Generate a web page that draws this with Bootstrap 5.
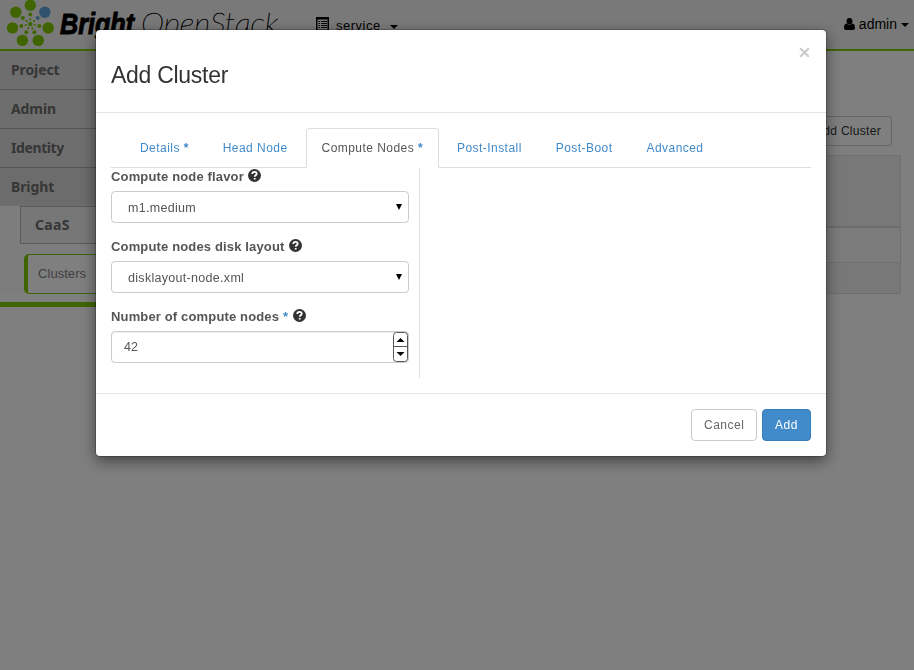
<!DOCTYPE html>
<html lang="en">
<head>
<meta charset="utf-8">
<meta name="viewport" content="width=device-width, initial-scale=1">
<title>Add Cluster</title>
<link href="https://cdn.jsdelivr.net/npm/bootstrap@5.3.0/dist/css/bootstrap.min.css" rel="stylesheet">
<style>
body{font-family:"Liberation Sans",Arial,sans-serif;font-size:13px;line-height:18px;color:#555;background:#fff;overflow:hidden}
.topbar{height:51px;background:#f2f2f2;border-bottom:2px solid #80cb00;color:#000}
.brand-logo{width:290px;height:49px;display:block}
.project-switch{margin-left:26px;padding-top:17px;letter-spacing:.5px}
.project-label{margin-left:7px}
.user-menu{padding:15px 5px 0 0;font-size:14px}
.user-icon{margin-top:3px}
.user-caret{margin-top:8px}
.side{width:240px;background:#fafafa;height:242px;font-family:"Noto Sans","Open Sans",sans-serif;font-weight:700;font-size:14px;letter-spacing:-.1px}
.side-item{height:39px;padding:10px 11px;background:#ddd;border-bottom:1px solid #aaa;color:#6c6c6c}
.side-item.tight{letter-spacing:-.4px}
.side-item.open{border-bottom-color:#ddd;background:#d8d8d8;height:38px}
.side-sub{margin-left:20px;height:38px;padding:9px 14px;border:1px solid #b4b4b4;background:#eee;color:#6c6c6c;letter-spacing:.3px}
.side-leaf{margin:10px 0 0 24px;height:40px;padding:10px;border:1px solid #80cb00;border-left-width:4px;border-radius:5px;background:#fff;color:#808080;font:13px/18px "Liberation Sans",Arial,sans-serif;letter-spacing:.05px}
.side-end{width:240px;height:5px;margin-top:9px;background:#80cb00}
.page-main{padding:65px 13px 0 20px}
.page-add{height:30px;width:110px;margin-right:9px;padding-right:10px;border:1px solid #ccc;border-radius:3px;color:#333;font-size:12px;letter-spacing:.3px}
.clusters{margin-top:9px;border:1px solid #ddd}
.cl-head{height:72px;background:#f1f1f1;border-bottom:2px solid #ddd}
.cl-row{height:35px;background:#f9f9f9;border-bottom:1px solid #ddd}
.cl-foot{height:30px;background:#f1f1f1}
.veil{background:rgba(0,0,0,.5)}
.modal-dialog.cluster-dialog{width:730px;max-width:730px;margin:30px 0 0 96px}
.cluster-dialog .modal-content{height:426px;border:0;border-radius:4px;box-shadow:0 5px 15px rgba(0,0,0,.5),0 0 0 1px rgba(0,0,0,.2);color:#555}
.cluster-dialog .modal-header{height:83px;padding:15px;border-color:#e5e5e5}
.cluster-dialog h3{font-size:23px;line-height:30px;color:#333;letter-spacing:-.28px;margin-top:7px}
.close-x{width:11px;height:11px;margin:-37px 1px 0 0;border:0;padding:0;background:none}
.cluster-dialog .modal-body{padding:15px 15px 0}
.nav-tabs.steps{height:40px;padding-left:13px;border-color:#ddd;gap:2px;letter-spacing:.45px;font-size:12px}
.steps .nav-link{height:40px;padding:10px 15px;color:#428bca;border-radius:4px 4px 0 0;white-space:nowrap}
.steps .nav-link.active{color:#555;border-color:#ddd #ddd #fff}
.req{color:#428bca;font-weight:700}
.fields{width:309px;height:210px;padding-right:10px;border-right:1px solid #ddd}
.fields label{display:flex;align-items:center;height:18px;margin-bottom:5px;font-weight:700;font-size:13px;letter-spacing:.15px;white-space:pre}
.fields .field{height:70px}
.help{width:13px;height:13px;margin:-3px 0 0 4.5px}
.box{height:32px;border:1px solid #ccc;border-radius:4px;letter-spacing:.3px;padding:1px 0 0 16px;color:#555;background:#fff;font-size:12.5px}
.box svg{margin-top:-1px}
.pick-arrow{margin-right:5px}
.box.num{padding:0 0 0 12px;box-shadow:inset 0 1px 1px rgba(0,0,0,.075);letter-spacing:0}
.box.num svg{margin-top:0}
.cluster-dialog .modal-footer{height:63px;padding:15px;gap:5px;border-color:#e5e5e5;align-items:flex-start}
.modal-footer .btn{height:32px;margin:0;padding:5px 12px;font-size:12px;line-height:20px;border-radius:4px;letter-spacing:.5px}
.modal-footer .btn-cancel{width:66px;border-color:#ccc;color:#666;background:#fff}
.modal-footer .btn-add{width:49px;background:#428bca;border-color:#357ebd;color:#fff}
</style>
</head>
<body>
<header class="topbar d-flex">
<svg class="brand-logo" viewBox="0 0 290 49">
<g fill="#80cb00"><circle cx="30.300" cy="5.300" r="5.700"/><circle cx="15.800" cy="12.300" r="5.700"/><circle cx="12.500" cy="27.900" r="5.700"/><circle cx="22.400" cy="40.400" r="5.700"/><circle cx="38.300" cy="40.400" r="5.700"/><circle cx="48.200" cy="27.900" r="5.700"/>
<circle cx="30.300" cy="14.500" r="2"/><circle cx="22.900" cy="18" r="2"/><circle cx="21.300" cy="25.900" r="2"/><circle cx="26.300" cy="32.300" r="2"/><circle cx="34.400" cy="32.300" r="2"/><circle cx="39.300" cy="25.900" r="2"/>
<circle cx="30.300" cy="24" r="2.300"/><circle cx="30.300" cy="19.300" r="1.100"/><circle cx="26.600" cy="21.100" r="1.100"/><circle cx="34" cy="21.100" r="1.100"/><circle cx="25.800" cy="25" r="1.100"/><circle cx="34.800" cy="25" r="1.100"/><circle cx="28.200" cy="28.300" r="1.100"/><circle cx="32.400" cy="28.300" r="1.100"/></g>
<g fill="#61a5d8"><circle cx="44.800" cy="12.300" r="5.700"/><circle cx="37.600" cy="18" r="2"/></g>
<text x="60" y="34" textLength="74" lengthAdjust="spacingAndGlyphs" font-family="Liberation Sans" font-size="29" font-weight="700" font-style="italic" stroke="#000" stroke-width="1">Bright</text>
<text x="141" y="34" textLength="137" lengthAdjust="spacingAndGlyphs" font-family="Lato" font-size="29" font-weight="100" font-style="italic" stroke="#000" stroke-width=".45">OpenStack</text>
</svg>
<div class="project-switch d-flex"><svg width="13" height="14" viewBox="0 0 13 14"><path d="M.75.75h11.500v12.500H.75z" fill="none" stroke="#000" stroke-width="1.500"/><path d="M0 0h13v2.500H0z"/><path d="M2.500 4.500h1.500m1 0h6m-8.500 2h1.500m1 0h6m-8.500 2h1.500m1 0h6m-8.500 2h1.500m1 0h6" stroke="#000"/></svg><span class="project-label">service</span><svg class="ms-2 mt-2" width="9" height="4"><path d="M1 0h8l-4 4z"/></svg></div>
<div class="user-menu d-flex ms-auto"><svg class="user-icon" width="11" height="13" viewBox="0 0 11 13"><ellipse cx="5.500" cy="3.200" rx="2.900" ry="3.200"/><path d="M2.500 5.400C.5 5.800 0 7.800 0 10q0 2 2 2h7q2 0 2-2c0-2.200-.5-4.200-2.500-4.600Q5.500 8.300 2.500 5.400z"/></svg><span class="ms-1 me-1">admin</span><svg class="user-caret" width="8" height="4"><path d="M0 0h8l-4 4z"/></svg></div>
</header>
<div class="d-flex">
<aside><nav class="side"><div class="side-item">Project</div><div class="side-item">Admin</div><div class="side-item tight">Identity</div><div class="side-item open">Bright</div><div class="side-sub">CaaS</div><div class="side-leaf">Clusters</div></nav><div class="side-end"></div></aside>
<main class="page-main flex-grow-1">
<div class="d-flex justify-content-end"><div class="page-add d-flex align-items-center justify-content-end">+ Add Cluster</div></div>
<div class="clusters"><div class="cl-head"></div><div class="cl-row"></div><div class="cl-foot"></div></div>
</main>
</div>
<div class="modal d-block veil" role="dialog" aria-label="Add Cluster">
<div class="modal-dialog cluster-dialog"><div class="modal-content">
<div class="modal-header"><h3 class="mb-0">Add Cluster</h3><button class="close-x ms-auto d-flex" aria-label="Close"><svg width="11" height="11"><path d="M1.200 1.200l8.600 8.600m0-8.600l-8.600 8.600" stroke="#ccc" stroke-width="2.300"/></svg></button></div>
<div class="modal-body">
<ul class="nav nav-tabs steps flex-nowrap">
<li class="nav-item"><a class="nav-link">Details <span class="req">*</span></a></li><li class="nav-item"><a class="nav-link">Head Node</a></li><li class="nav-item"><a class="nav-link active">Compute Nodes <span class="req">*</span></a></li><li class="nav-item"><a class="nav-link">Post-Install</a></li><li class="nav-item"><a class="nav-link">Post-Boot</a></li><li class="nav-item"><a class="nav-link">Advanced</a></li>
</ul>
<div class="fields">
<div class="field"><label>Compute node flavor<svg class="help" viewBox="0 0 13 13"><circle cx="6.500" cy="6.500" r="6.500" fill="#333"/><path d="M4.300 5C4.300 2.200 8.700 2.200 8.700 4.700c0 1.500-2 1.500-2 3M6.700 8.900v1.700" fill="none" stroke="#fff" stroke-width="1.800"/></svg></label><div class="box d-flex align-items-center">m1.medium<svg class="ms-auto pick-arrow" width="8" height="7"><path d="M1 0h6L4 6z"/></svg></div></div>
<div class="field"><label>Compute nodes disk layout<svg class="help" viewBox="0 0 13 13"><circle cx="6.500" cy="6.500" r="6.500" fill="#333"/><path d="M4.300 5C4.300 2.200 8.700 2.200 8.700 4.700c0 1.500-2 1.500-2 3M6.700 8.900v1.700" fill="none" stroke="#fff" stroke-width="1.800"/></svg></label><div class="box d-flex align-items-center">disklayout-node.xml<svg class="ms-auto pick-arrow" width="8" height="7"><path d="M1 0h6L4 6z"/></svg></div></div>
<div class="field"><label>Number of compute nodes <span class="req">*</span><svg class="help" viewBox="0 0 13 13"><circle cx="6.500" cy="6.500" r="6.500" fill="#333"/><path d="M4.300 5C4.300 2.200 8.700 2.200 8.700 4.700c0 1.500-2 1.500-2 3M6.700 8.900v1.700" fill="none" stroke="#fff" stroke-width="1.800"/></svg></label><div class="box num d-flex align-items-center">42<svg class="ms-auto" width="15" height="30"><rect x=".5" y=".5" width="14" height="29" rx="3" fill="#fff" stroke="#555"/><path d="M1 14.500h13" stroke="#555"/><path d="M3.500 10h8l-4-4zM3.500 20h8l-4 4z"/></svg></div></div>
</div>
</div>
<div class="modal-footer"><button class="btn btn-cancel">Cancel</button><button class="btn btn-add">Add</button></div>
</div></div></div>
<script src="https://cdn.jsdelivr.net/npm/bootstrap@5.3.0/dist/js/bootstrap.bundle.min.js"></script>
</body>
</html>
